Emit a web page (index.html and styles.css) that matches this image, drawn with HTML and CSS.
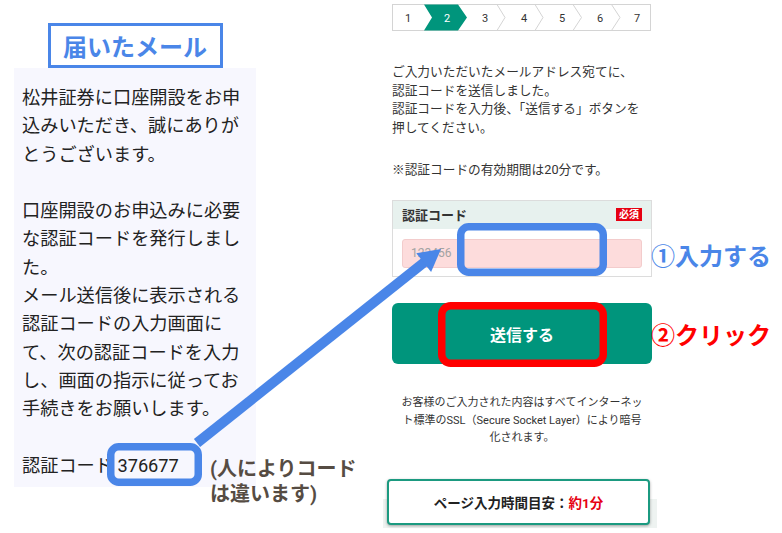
FILE: index.html
```html
<!DOCTYPE html>
<html lang="ja">
<head>
<meta charset="utf-8">
<title>認証コード</title>
<link rel="stylesheet" href="styles.css">
</head>
<body>
<div class="page">
  <div class="mail-col">
    <div class="mail-title">届いたメール</div>
    <div class="mail-body">
      <p>松井証券に口座開設をお申<br>込みいただき、誠にありが<br>とうございます。</p>
      <p>口座開設のお申込みに必要<br>な認証コードを発行しまし<br>た。<br>メール送信後に表示される<br>認証コードの入力画面に<br>て、次の認証コードを入力<br>し、画面の指示に従ってお<br>手続きをお願いします。</p>
      <p>認証コード <span class="code">376677</span></p>
    </div>
  </div>

  <div class="form-col">
    <svg class="steps" viewBox="0 0 260 27" width="260" height="27">
      <rect x="0.5" y="0.5" width="258" height="26" fill="#fff" stroke="#d4d4d4"/>
      <polygon points="32,0.5 66,0.5 75,13.5 66,26.5 32,26.5 40,13.5" fill="#00957c"/>
      <polyline points="105,0.5 113,13.5 105,26.5" fill="none" stroke="#d4d4d4"/>
      <polyline points="143,0.5 151,13.5 143,26.5" fill="none" stroke="#d4d4d4"/>
      <polyline points="181,0.5 189.5,13.5 181,26.5" fill="none" stroke="#d4d4d4"/>
      <polyline points="219.5,0.5 228,13.5 219.5,26.5" fill="none" stroke="#d4d4d4"/>
      <g class="step-num">
        <text x="16" y="17.5">1</text>
        <text x="55" y="17.5" class="on">2</text>
        <text x="93" y="17.5">3</text>
        <text x="132" y="17.5">4</text>
        <text x="170" y="17.5">5</text>
        <text x="208" y="17.5">6</text>
        <text x="245" y="17.5">7</text>
      </g>
    </svg>

    <p class="lead">ご入力いただいたメールアドレス宛てに、<br>認証コードを送信しました。<br>認証コードを入力後、「送信する」ボタンを<br>押してください。</p>
    <p class="note">※認証コードの有効期間は20分です。</p>

    <div class="field">
      <div class="field-head"><span class="field-label">認証コード</span><span class="req">必須</span></div>
      <div class="field-body"><input class="code-input" type="text" placeholder="123456"></div>
    </div>

    <button class="submit" type="button">送信する</button>

    <p class="ssl">お客様のご入力された内容はすべてインターネッ<br>ト標準のSSL（Secure Socket Layer）により暗号<br>化されます。</p>

    <div class="footer">
      <div class="time-box">ページ入力時間目安：<em>約1分</em></div>
    </div>
  </div>

  <svg class="annot" width="782" height="533" viewBox="0 0 782 533">
    <line x1="197" y1="443" x2="426" y2="260.8" stroke="#4a86e8" stroke-width="10"/>
    <polygon points="441,249 431.1,272 416.3,253.2" fill="#4a86e8"/>
    <rect x="110.75" y="446.75" width="87.5" height="35.5" rx="8" fill="none" stroke="#4a86e8" stroke-width="7.5"/>
    <rect x="460.75" y="226.75" width="142.5" height="45.5" rx="8" fill="none" stroke="#4a86e8" stroke-width="7.5"/>
    <rect x="441.75" y="305.75" width="161.5" height="57.5" rx="9" fill="none" stroke="#ff0000" stroke-width="7.5"/>
  </svg>
  <div class="label label-input">①入力する</div>
  <div class="label label-click">②クリック</div>
  <div class="label-note">(人によりコード<br>は違います)</div>
</div>
</body>
</html>
```

FILE: styles.css
```css
* { box-sizing: border-box; }

html, body {
  margin: 0;
  padding: 0;
  background: #fff;
}

body {
  font-family: Roboto, "Noto Sans CJK JP", sans-serif;
  color: #333;
}

.page {
  position: relative;
  width: 782px;
  height: 533px;
  overflow: hidden;
  display: flex;
  align-items: flex-start;
}

/* ---------- left: received mail ---------- */
.mail-col {
  margin-left: 14px;
  width: 242px;
  display: flex;
  flex-direction: column;
  align-items: center;
}

.mail-title {
  margin-top: 23px;
  width: 175px;
  height: 45px;
  border: 3px solid #4a86e8;
  background: #fff;
  color: #4a86e8;
  font-size: 24px;
  font-weight: 700;
  display: flex;
  align-items: center;
  justify-content: center;
}

.mail-body {
  align-self: stretch;
  background: #f7f7fe;
  padding: 16px 0 7px 8px;
  font-size: 18.2px;
  line-height: 28.3px;
  color: #222;
  white-space: nowrap;
}

.mail-body p { margin: 0; }
.mail-body p + p { margin-top: 28.3px; }

.code { font-family: Roboto, sans-serif; }

/* ---------- right: form ---------- */
.form-col {
  margin-left: 136px;
  width: 260px;
}

.steps {
  display: block;
  margin-top: 4px;
}

.step-num text {
  font-family: Roboto, sans-serif;
  font-size: 11px;
  fill: #333;
  text-anchor: middle;
}

.step-num text.on { fill: #fff; }

.lead, .note {
  margin: 0;
  font-size: 12.7px;
  line-height: 18.6px;
  color: #333;
  white-space: nowrap;
}

.lead { margin-top: 32px; }
.note { margin-top: 24px; }

.field {
  margin-top: 20px;
  border: 1px solid #dcdcdc;
}

.field-head {
  height: 28px;
  background: #e7f1ee;
  display: flex;
  align-items: center;
  justify-content: space-between;
  padding: 0 9px 0 9px;
}

.field-label {
  font-size: 13px;
  font-weight: 700;
  color: #333;
}

.req {
  background: #e60012;
  color: #fff;
  font-size: 10px;
  font-weight: 700;
  line-height: 13px;
  padding: 0 3px;
}

.field-body {
  padding: 10px 9px 8px;
  background: #fff;
}

.code-input {
  display: block;
  width: 240px;
  height: 29px;
  margin: 0;
  padding: 0 0 0 8px;
  background: #fddcdc;
  border: 1px solid #f3cccc;
  border-radius: 3px;
  font-family: Roboto, sans-serif;
  font-size: 12px;
  color: #333;
  outline: none;
}

.code-input::placeholder { color: #a3a3a3; }

.submit {
  display: block;
  margin-top: 26px;
  width: 260px;
  height: 61.5px;
  background: #00957c;
  border: none;
  border-radius: 6px;
  color: #fff;
  font-family: Roboto, "Noto Sans CJK JP", sans-serif;
  font-size: 16px;
  font-weight: 700;
  padding: 0;
}

.ssl {
  margin: 30px 0 0;
  font-size: 11px;
  line-height: 17.2px;
  text-align: center;
  color: #333;
  white-space: nowrap;
}

.footer {
  margin-top: 33px;
  margin-left: -9px;
  width: 274px;
  height: 49px;
  padding-left: 4px;
  background: linear-gradient(to bottom, transparent 20px, #eef3f1 20px);
}

.time-box {
  width: 263px;
  height: 46px;
  border: 2px solid #1b9a80;
  border-radius: 4px;
  background: #fff;
  box-shadow: 0 1px 3px rgba(0, 0, 0, 0.35);
  display: flex;
  align-items: center;
  justify-content: center;
  font-size: 13.5px;
  font-weight: 700;
  color: #222;
}

.time-box em {
  font-style: normal;
  color: #e60012;
}

/* ---------- annotations (overlay) ---------- */
.annot {
  position: absolute;
  left: 0;
  top: 0;
  pointer-events: none;
}

.label {
  position: absolute;
  left: 651px;
  font-size: 24px;
  font-weight: 700;
  line-height: 30px;
  white-space: nowrap;
}

.label-input { top: 242px; color: #4a86e8; }
.label-click { top: 321px; color: #ff0000; }

.label-note {
  position: absolute;
  left: 210px;
  top: 457px;
  font-size: 20px;
  font-weight: 700;
  line-height: 25px;
  color: #564c43;
  white-space: nowrap;
}
```
